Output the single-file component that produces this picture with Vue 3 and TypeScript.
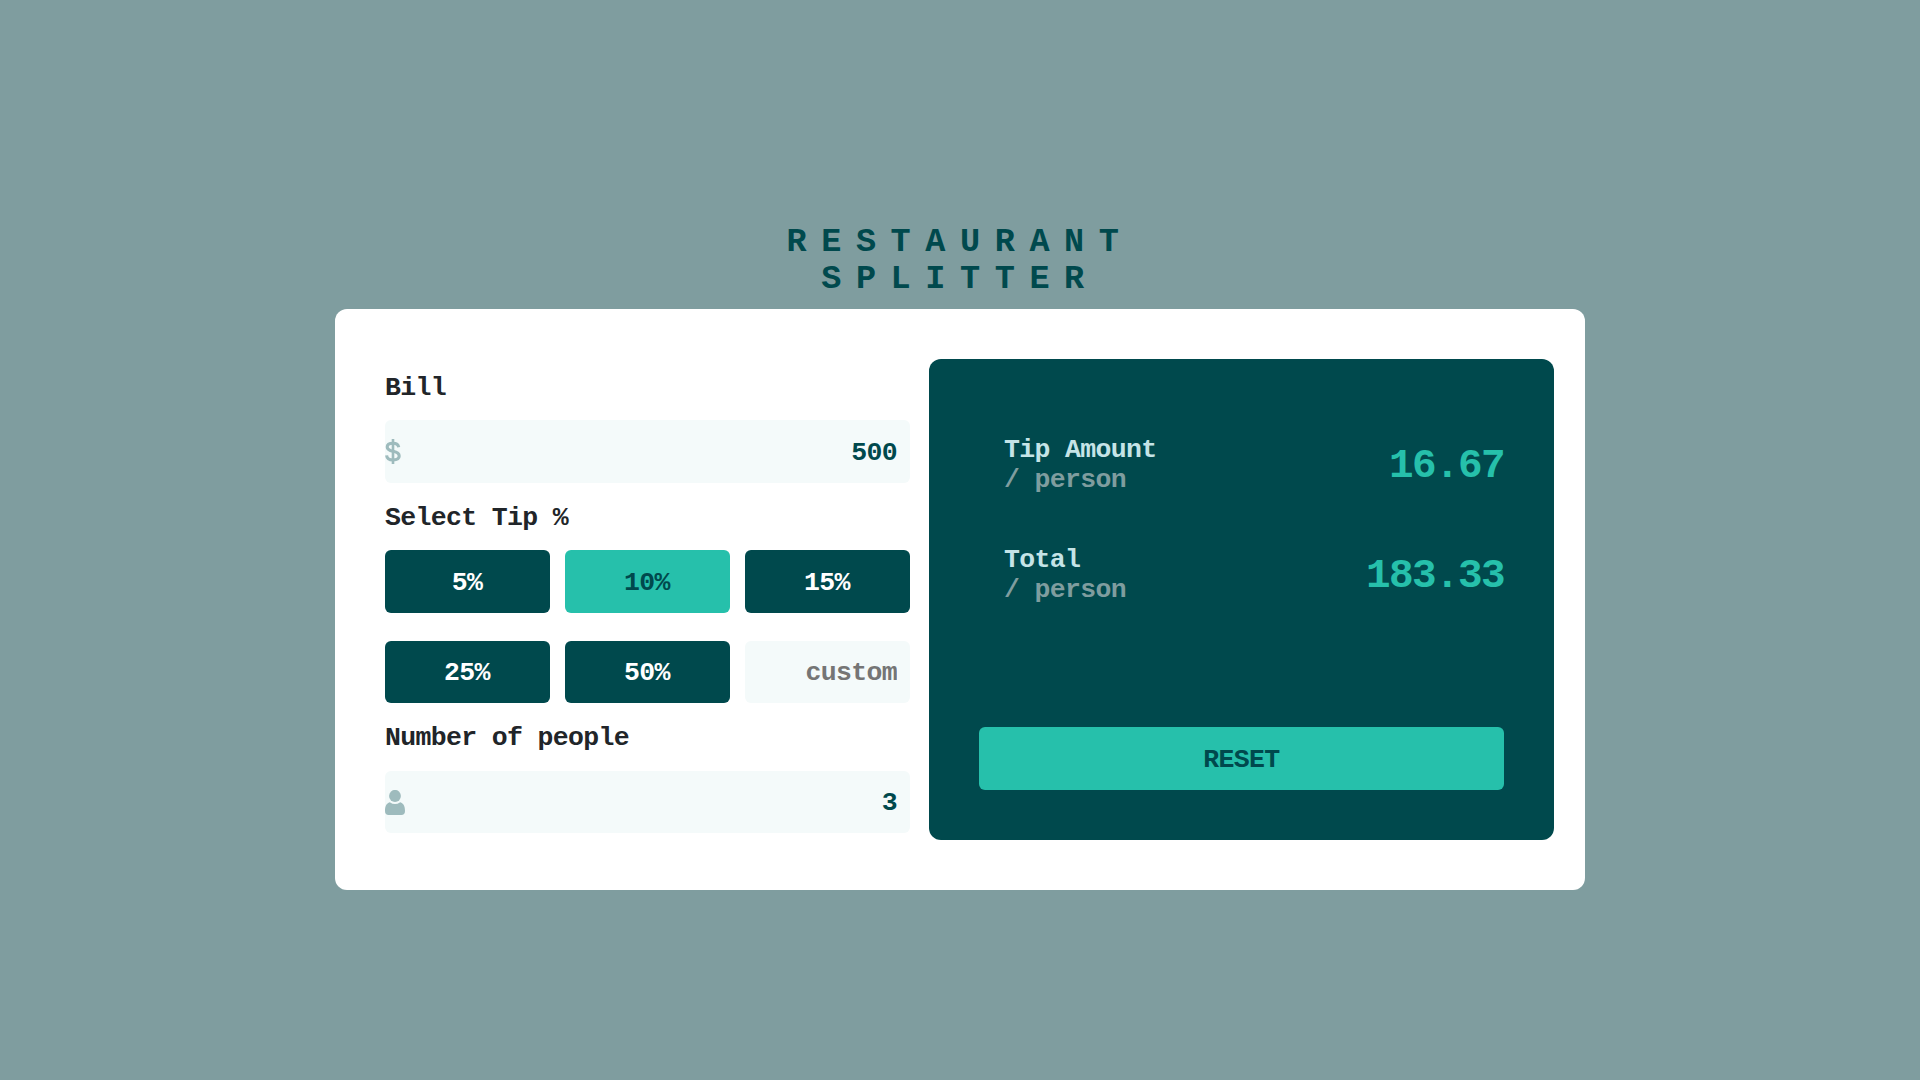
<script setup lang="ts">
import { computed, ref } from 'vue'

const bill = ref('500')
const people = ref('3')
const custom = ref('')
const selected = ref<number | null>(10)
const presets: number[] = [5, 10, 15, 25, 50]

const percent = computed<number>(() => Number(custom.value) || selected.value || 0)
const tipEach = computed<number>(() => {
  const count = Number(people.value)
  return count > 0 ? (Number(bill.value) * percent.value) / 100 / count : 0
})
const totalEach = computed<number>(() => {
  const count = Number(people.value)
  return count > 0 ? Number(bill.value) / count + tipEach.value : 0
})

function pick(value: number): void {
  selected.value = value
  custom.value = ''
}

function reset(): void {
  bill.value = ''
  people.value = ''
  custom.value = ''
  selected.value = null
}
</script>

<template>
  <main class="page">
    <h1 class="title">RESTAURANT<br />SPLITTER</h1>
    <section class="card">
      <div class="form">
        <label class="label" for="bill">Bill</label>
        <div class="field">
          <svg class="icon" width="16" height="25" viewBox="0 0 16 25" fill="none" stroke="#9ebbbd">
            <path d="M8 0V25" stroke-width="2.6" />
            <path
              d="M13.700 8.200C13.300 5.400 11.400 4.200 8 4.200C4.500 4.200 2.200 5.500 2.200 8C2.200 10.600 4.200 11.500 8 12.300C12.200 13.100 14.200 14.300 14.200 17C14.200 19.700 12 20.900 8.100 20.900C4.200 20.900 1.900 19.400 1.600 16.300"
              stroke-width="3.1"
            />
          </svg>
          <input id="bill" v-model="bill" class="input" type="text" />
        </div>

        <span class="label label-next">Select Tip %</span>
        <div class="tips">
          <button
            v-for="value in presets"
            :key="value"
            class="tip"
            :class="{ active: selected === value }"
            type="button"
            @click="pick(value)"
          >{{ value }}%</button>
          <input v-model="custom" class="input custom" type="text" placeholder="custom" />
        </div>

        <label class="label label-next" for="people">Number of people</label>
        <div class="field field-people">
          <svg class="icon" width="20" height="25" viewBox="0 0 20 25" fill="#9ebbbd">
            <ellipse cx="10" cy="6" rx="5.900" ry="6.100" />
            <path d="M4.800 12.200Q10 16 15.200 12.200C18.700 13.300 20 16.300 20 21Q20 25 16.300 25H3.700Q0 25 0 21C0 16.300 1.300 13.300 4.800 12.200Z" />
          </svg>
          <input id="people" v-model="people" class="input" type="text" />
        </div>
      </div>

      <div class="result">
        <div class="row">
          <div class="caption">Tip Amount<div class="per">/ person</div></div>
          <div class="amount">{{ tipEach.toFixed(2) }}</div>
        </div>
        <div class="row">
          <div class="caption">Total<div class="per">/ person</div></div>
          <div class="amount">{{ totalEach.toFixed(2) }}</div>
        </div>
        <button class="reset" type="button" @click="reset">RESET</button>
      </div>
    </section>
  </main>
</template>

<style>
body {
  margin: 0;
  background: #7f9d9f;
}
</style>

<style scoped>
.page,
.page * {
  box-sizing: border-box;
}
.page {
  min-height: 1080px;
  padding-top: 224px;
  display: flex;
  flex-direction: column;
  align-items: center;
  background: #7f9d9f;
  font-family: "Liberation Mono", monospace;
  font-size: 26.5px;
  font-weight: 700;
  letter-spacing: -0.65px;
  color: #212529;
}
.title {
  margin: 0 0 11px;
  font-size: 33.5px;
  line-height: 37px;
  letter-spacing: 14.6px;
  text-align: center;
  color: #00494d;
}
.card {
  width: 1250px;
  height: 581px;
  padding: 50px 31px 50px 50px;
  display: flex;
  justify-content: space-between;
  background: #fff;
  border-radius: 12px;
}
.form {
  width: 525px;
  padding-top: 14px;
  display: flex;
  flex-direction: column;
}
.label {
  height: 30px;
  line-height: 30px;
  margin-bottom: 17px;
}
.label-next {
  margin-top: 20px;
}
.field {
  height: 63px;
  display: flex;
  align-items: center;
  background: #f4fafa;
  border-radius: 6px;
}
.field-people {
  height: 62px;
  margin-top: 1px;
}
.icon {
  flex: none;
}
.input,
.tip,
.reset {
  font: inherit;
  letter-spacing: inherit;
  border: 0;
  outline: 0;
  border-radius: 6px;
}
.input {
  flex: 1;
  min-width: 0;
  height: 100%;
  padding: 2px 13px 0 0;
  background: transparent;
  text-align: right;
  color: #00494d;
}
.tips {
  display: grid;
  grid-template-columns: repeat(3, 165px);
  grid-template-rows: 63px 62px;
  column-gap: 15px;
  row-gap: 28px;
}
.tip {
  padding: 2px 1px 0 0;
  background: #00494d;
  color: #fff;
}
.tip.active {
  background: #26c0ab;
  color: #00494d;
}
.custom {
  background: #f4fafa;
}
.custom::placeholder {
  color: #757575;
  opacity: 1;
}
.result {
  width: 625px;
  height: 481px;
  padding: 76px 50px 50px;
  display: flex;
  flex-direction: column;
  background: #00494d;
  border-radius: 12px;
}
.row {
  height: 60px;
  margin-bottom: 50px;
  padding-left: 25px;
  display: flex;
  justify-content: space-between;
}
.caption {
  line-height: 30px;
  color: #c5e4e7;
}
.per {
  color: #7f9d9f;
}
.amount {
  padding-top: 1px;
  font-size: 41px;
  line-height: 60px;
  letter-spacing: -1.600px;
  color: #26c0ab;
}
.reset {
  height: 63px;
  margin-top: auto;
  padding: 2px 0 0;
  background: #26c0ab;
  color: #00494d;
}
</style>
